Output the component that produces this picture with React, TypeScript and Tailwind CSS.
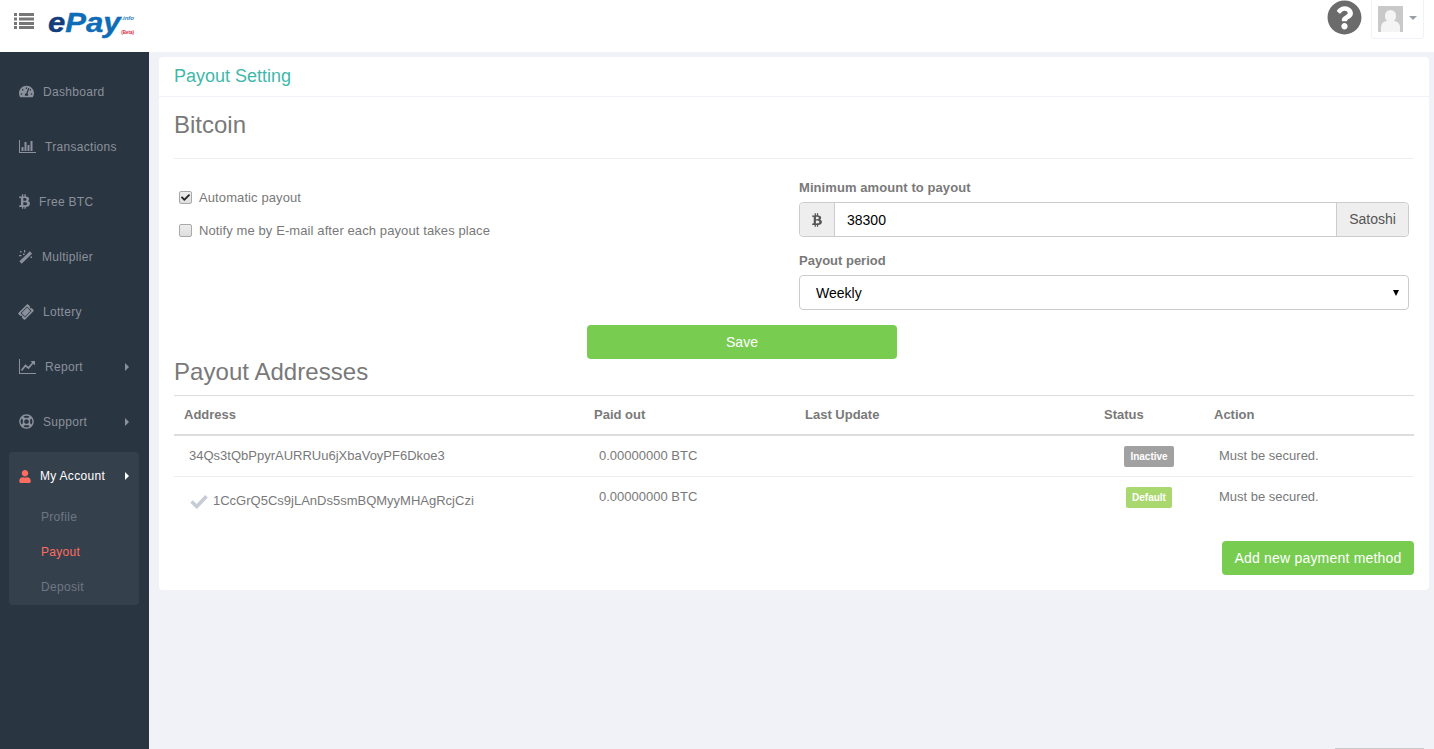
import type { ReactNode } from "react";
import {
  FaBtc,
  FaCheck,
  FaQuestionCircle,
  FaRegLifeRing,
  FaTachometerAlt,
  FaTicketAlt,
  FaUser,
} from "react-icons/fa";

function BarChartIcon() {
  return (
    <svg viewBox="0 0 17 13" fill="currentColor" className="h-[13px] w-[17px]" aria-hidden="true">
      <path d="M0 0h1v12h16v1H0z" />
      <path d="M2.5 7h2v4h-2zM5.5 2h2v9h-2zM8.5 5h2v6h-2zM11.5 1h2v10h-2z" />
    </svg>
  );
}

function LineChartIcon() {
  return (
    <svg viewBox="0 0 17 15" className="h-[15px] w-[17px]" aria-hidden="true">
      <path d="M0 0h1v14h16v1H0z" fill="currentColor" />
      <path d="M2.5 11.5 6.5 6.5 9.5 9 14.5 3" fill="none" stroke="currentColor" strokeWidth="1.7" />
      <path d="M11.5 2h4.5v4.5z" fill="currentColor" />
    </svg>
  );
}

function WandIcon() {
  return (
    <svg viewBox="0 0 14 14" className="h-[14px] w-[14px]" aria-hidden="true">
      <path d="M1.500 12.500 12 2.500" fill="none" stroke="currentColor" strokeWidth="3.200" />
      <path d="M1 1h1.500v1.500H1zM5 0h1.200v2.500H5zM0 5h2.500v1.200H0zM4 3.500h1.500V5H4zM11.500 6.500H13V8h-1.500z" fill="currentColor" />
    </svg>
  );
}

function ListIcon() {
  return (
    <svg viewBox="0 0 20 16" fill="currentColor" className="ml-[14px] mt-[13px] h-[16px] w-[20px] text-[#777777]" aria-hidden="true">
      <path d="M0 0h3v3H0zM5 0h15v3H5zM0 4.500h3v3H0zM5 4.500h15v3H5zM0 9h3v3H0zM5 9h15v3H5zM0 13h3v3H0zM5 13h15v3H5z" />
    </svg>
  );
}

function Arrow() {
  return <span className="ml-auto h-0 w-0 border-y-[4px] border-l-[4px] border-y-transparent border-l-[#8a919b]" />;
}

function NavItem({ icon, label, textGap, arrow }: { icon: ReactNode; label: string; textGap: string; arrow?: boolean }) {
  return (
    <a className="flex h-[55px] items-center pl-[19px] pr-[20px] text-[12px] tracking-[0.3px] text-[#8a919b]">
      {icon}
      <span className={textGap}>{label}</span>
      {arrow && <Arrow />}
    </a>
  );
}

function Sidebar() {
  return (
    <aside className="w-[149px] shrink-0 bg-[#2a3542] pt-[12px]">
      <NavItem icon={<FaTachometerAlt className="h-[15px] w-[15px]" />} label="Dashboard" textGap="ml-[9px]" />
      <NavItem icon={<BarChartIcon />} label="Transactions" textGap="ml-[9px]" />
      <NavItem icon={<FaBtc className="h-[15px] w-[11px]" />} label="Free BTC" textGap="ml-[9px]" />
      <NavItem icon={<WandIcon />} label="Multiplier" textGap="ml-[9px]" />
      <NavItem icon={<FaTicketAlt className="h-[14px] w-[14px] -rotate-45" />} label="Lottery" textGap="ml-[10px]" />
      <NavItem icon={<LineChartIcon />} label="Report" textGap="ml-[9px]" arrow />
      <NavItem icon={<FaRegLifeRing className="h-[15px] w-[15px]" />} label="Support" textGap="ml-[9px]" arrow />

      {/* open group */}
      <div className="ml-[9px] mt-[3px] h-[153px] w-[130px] rounded-[4px] bg-[#35404d]">
        <a className="flex h-[47px] items-center pl-[10px] pr-[10px] pt-[1px] text-[12px] tracking-[0.3px] text-white">
          <FaUser className="h-[13px] w-[12px] text-[#ff6c60]" />
          <span className="ml-[9px]">My Account</span>
          <span className="ml-auto h-0 w-0 border-y-[4px] border-l-[4px] border-y-transparent border-l-white" />
        </a>
        <div className="pl-[32px] text-[12px] tracking-[0.3px] text-[#6e7783]">
          <a className="flex h-[35px] items-center">Profile</a>
          <a className="flex h-[35px] items-center text-[#ff6c60]">Payout</a>
          <a className="flex h-[35px] items-center">Deposit</a>
        </div>
      </div>
    </aside>
  );
}

function Header() {
  return (
    <header className="flex h-[52px] shrink-0 items-start bg-white">
      <ListIcon />
      <div className="relative ml-[14px] mt-[1px] h-[36px] w-[86px] italic">
        <span className="inline-block origin-left scale-x-[1.11] text-[28px] font-bold leading-[44px] text-[#0f6cb6] [-webkit-text-stroke:0.4px_currentColor]">
          <span className="text-[#123f7c]">e</span>Pay
        </span>
        <span className="absolute right-0 top-[14px] text-[6px] font-bold leading-none text-[#2b7cc0]">.info</span>
        <span className="absolute right-0 top-[30px] text-[4.5px] font-bold not-italic leading-none text-[#d9263a]">(Beta)</span>
      </div>
      <div className="ml-auto mr-[10px] flex items-start">
        <FaQuestionCircle className="h-[35px] w-[35px] text-[#6b6b6b]" />
        <button className="ml-[9px] flex h-[39px] w-[53px] items-start rounded-b-[4px] border border-t-0 border-[#f1f2f7] pl-[6px] pt-[6px]">
          <span className="relative block h-[26px] w-[25px] overflow-hidden bg-[#c9c9c9]">
            <span className="absolute left-[7px] top-[4px] h-[12px] w-[11px] rounded-full bg-[#f4f4f4]" />
            <span className="absolute left-[3px] top-[15px] h-[14px] w-[19px] rounded-t-[6px] bg-[#f4f4f4]" />
          </span>
          <span className="ml-[6px] mt-[10px] h-0 w-0 border-x-[4px] border-t-[4px] border-x-transparent border-t-[#9aa0a8]" />
        </button>
      </div>
    </header>
  );
}

function CheckRow({ label, checked = false }: { label: string; checked?: boolean }) {
  return (
    <label className="flex h-[18px] items-center">
      <span className="relative ml-[5px] h-[13px] w-[13px]">
        <input
          type="checkbox"
          defaultChecked={checked}
          className="block h-[13px] w-[13px] appearance-none rounded-[2px] border border-[#a9a9a9] bg-gradient-to-b from-[#ededed] to-[#dedede]"
        />
        {checked && <FaCheck className="absolute left-[2px] top-[2px] h-[9px] w-[9px] text-[#222222]" />}
      </span>
      <span className="ml-[7px] pt-[2px] tracking-[0.1px]">{label}</span>
    </label>
  );
}

function PayoutForm() {
  return (
    <div className="flex pt-[19px]">
      <div className="flex-1 pt-[10px]">
        <CheckRow label="Automatic payout" checked />
        <div className="mt-[15px]">
          <CheckRow label="Notify me by E-mail after each payout takes place" />
        </div>
      </div>
      <div className="mr-[5px] w-[610px]">
        <label className="block pt-[1px] font-bold leading-[18px] tracking-[0.08px]">Minimum amount to payout</label>
        <div className="mt-[5px] flex h-[35px] rounded-[4px] border border-[#cccccc]">
          <span className="flex w-[35px] items-center justify-center rounded-l-[4px] border-r border-[#cccccc] bg-[#eeeeee] text-[#555555]">
            <FaBtc className="h-[14px] w-[10px]" />
          </span>
          <input
            defaultValue="38300"
            className="min-w-0 flex-1 pl-[12px] pt-[2px] text-[14px] text-black outline-none"
          />
          <span className="flex w-[72px] items-center justify-center rounded-r-[4px] border-l border-[#cccccc] bg-[#eeeeee] text-[14px] text-[#555555]">
            Satoshi
          </span>
        </div>
        <label className="mt-[15px] block font-bold leading-[18px]">Payout period</label>
        <div className="relative mt-[5px]">
          <select className="block h-[35px] w-full appearance-none rounded-[4px] border border-[#cccccc] bg-white pl-[16px] pt-[2px] text-[14px] text-black outline-none">
            <option>Weekly</option>
          </select>
          <span className="absolute right-[10px] top-[15px] h-0 w-0 border-x-[3px] border-t-[6px] border-x-transparent border-t-black" />
        </div>
      </div>
    </div>
  );
}

function StatusBadge({ label, color }: { label: string; color: string }) {
  return (
    <span className={`inline-block h-[21px] rounded-[2px] px-[6px] text-[10px] font-bold leading-[21px] text-white ${color}`}>
      {label}
    </span>
  );
}

function AddressTable() {
  const th = "h-[39px] border-t border-b-[2px] border-[#dddddd] pl-[10px] text-left font-bold";
  const td = "pl-[15px] pt-[11px] align-top leading-[18px]";
  return (
    <table className="mt-[11px] w-full table-fixed">
      <colgroup>
        <col className="w-[410px]" />
        <col className="w-[211px]" />
        <col className="w-[299px]" />
        <col className="w-[110px]" />
        <col className="w-[210px]" />
      </colgroup>
      <thead>
        <tr>
          <th className={th}>Address</th>
          <th className={th}>Paid out</th>
          <th className={th}>Last Update</th>
          <th className={th}>Status</th>
          <th className={th}>Action</th>
        </tr>
      </thead>
      <tbody>
        <tr className="h-[42px] border-b border-[#eeeeee]">
          <td className={td}>34Qs3tQbPpyrAURRUu6jXbaVoyPF6Dkoe3</td>
          <td className={td}>0.00000000 BTC</td>
          <td className={td} />
          <td className="pt-[10px] text-center align-top leading-none">
            <StatusBadge label="Inactive" color="bg-[#a1a1a1]" />
          </td>
          <td className={td}>Must be secured.</td>
        </tr>
        <tr className="h-[46px]">
          <td className={td}>
            <div className="flex h-[26px] items-center">
              <svg viewBox="0 0 18 15" className="ml-[1px] h-[15px] w-[18px] text-[#c5ccd5]" aria-hidden="true">
                <path d="M1.500 7.500 6.800 12.500 16.500 2.200" fill="none" stroke="currentColor" strokeWidth="3.600" />
              </svg>
              <span className="ml-[5px]">1CcGrQ5Cs9jLAnDs5smBQMyyMHAgRcjCzi</span>
            </div>
          </td>
          <td className={td}>0.00000000 BTC</td>
          <td className={td} />
          <td className="pt-[10px] text-center align-top leading-none">
            <StatusBadge label="Default" color="bg-[#a9d86e]" />
          </td>
          <td className={td}>Must be secured.</td>
        </tr>
      </tbody>
    </table>
  );
}

export default function App() {
  return (
    <div className="flex h-screen flex-col overflow-hidden bg-[#f1f2f7] font-['Liberation_Sans',Arial,sans-serif] text-[13px] text-[#797979]">
      <Header />
      <div className="flex min-h-0 flex-1">
        <Sidebar />
        <main className="relative flex-1 pl-[10px] pr-[5px] pt-[5px]">
          <section className="rounded-[4px] bg-white">
            <h2 className="h-[40px] border-b border-[#eff2f7] pl-[15px] text-[18px] font-normal leading-[38px] text-[#3fb8aa]">
              Payout Setting
            </h2>
            <div className="px-[15px] pb-[15px] pt-[16px]">
              <h3 className="text-[24px] font-normal leading-[24px]">Bitcoin</h3>
              <hr className="mt-[21px] border-[#eeeeee]" />
              <PayoutForm />
              <div className="mt-[15px] pl-[413px]">
                <button className="h-[34px] w-[310px] rounded-[4px] bg-[#78cd51] text-[14px] text-white">
                  Save
                </button>
              </div>
              <h3 className="mt-[1px] text-[24px] font-normal leading-[24px] tracking-[0.05px]">Payout Addresses</h3>
              <AddressTable />
              <div className="mt-[18px] flex justify-end">
                <button className="h-[34px] w-[192px] rounded-[4px] bg-[#78cd51] pt-[1px] text-[14px] tracking-[0.2px] text-white">
                  Add new payment method
                </button>
              </div>
            </div>
          </section>
          <div className="absolute bottom-0 right-[10px] h-px w-[89px] bg-[#c8c8c8]" />
        </main>
      </div>
    </div>
  );
}
